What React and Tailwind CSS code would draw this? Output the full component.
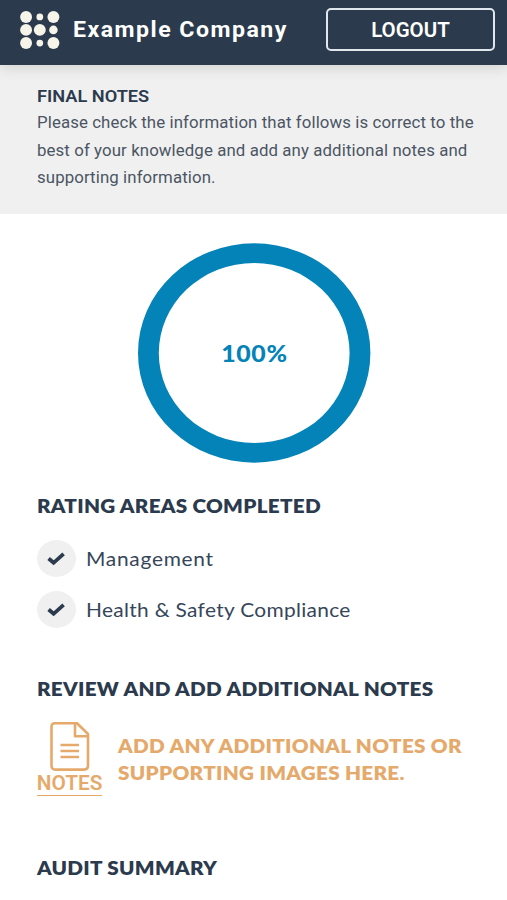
const dots = [
  [6, 6, 6], [19.8, 6, 3.4], [33.5, 6, 6],
  [6, 19, 6], [19.8, 19, 6], [33.5, 19, 4.3],
  [6, 32.2, 6], [19.8, 32.2, 3.4], [33.5, 32.2, 6],
];

function Logo() {
  return (
    <svg className="h-[38px] w-10 shrink-0" viewBox="0 0 40 38.2" fill="#f7f4ea">
      {dots.map(([x, y, r]) => (
        <circle key={`${x}-${y}`} cx={x} cy={y} r={r} />
      ))}
    </svg>
  );
}

function Header() {
  return (
    <header className="relative flex h-[65px] items-start bg-[#2b3b4d] pr-3 pl-[19.5px] text-white shadow-[0_2px_14px_rgba(0,0,0,0.14)]">
      <div className="flex h-[59px] items-center">
        <Logo />
        <span className="ml-[13px] origin-left scale-x-[1.05] whitespace-nowrap text-[22px] font-bold tracking-[1.42px]">Example Company</span>
      </div>
      <button className="mt-2 ml-auto h-[43px] w-[169px] rounded-[5px] border-2 border-[#dfe7ec] pt-[2px] text-[19.5px] font-semibold">
        <span className="inline-block scale-x-[1.05]">LOGOUT</span>
      </button>
    </header>
  );
}

function CheckItem({ children, tracking }) {
  return (
    <li className="flex h-[37px] items-center">
      <span className="flex h-[37px] w-[39px] items-center justify-center rounded-[50%] bg-[#f0f0f0]">
        <svg className="mr-px h-[14px] w-[18px]" viewBox="0 0 18 14" fill="none" stroke="#2b3b4d" strokeWidth="3.8">
          <path d="M1.6 6.5 6.6 10.8 16.6 1.9" />
        </svg>
      </span>
      <span className={`ml-[10px] -mt-[2px] origin-left scale-x-[1.045] whitespace-nowrap text-[20px] text-[#36465a] ${tracking}`}>{children}</span>
    </li>
  );
}

function Heading({ children }) {
  return (
    <h2 className="origin-left scale-x-[1.06] whitespace-nowrap text-[19.5px] leading-[27px] font-extrabold tracking-[0.26px] text-[#2b3b4d]">
      {children}
    </h2>
  );
}

export default function App() {
  return (
    <div className="h-[900px] w-[507px] overflow-hidden bg-white font-[Roboto,sans-serif]">
      <Header />
      <section className="h-[149px] bg-[#f0f0f0] pt-[18px] pl-[37px]">
        <h1 className="origin-left scale-x-[1.07] text-[17px] leading-[26px] font-semibold text-[#2b3b4d]">FINAL NOTES</h1>
        <p className="origin-left scale-x-[1.05] whitespace-nowrap text-[16px] leading-[27.5px] tracking-[0.1px] text-[#4b5563]">
          Please check the information that follows is correct to the<br />
          best of your knowledge and add any additional notes and<br />
          supporting information.
        </p>
      </section>
      <main className="px-[37px] font-[Lato,sans-serif]">
        <div className="mt-[29px] ml-[101px] grid h-[220px] w-[233px] place-items-center">
          <svg className="col-start-1 row-start-1 h-[220px] w-[233px]" viewBox="0 0 233 220">
            <path fillRule="evenodd" fill="#0483b8" d="M0 110a116.2 109.6 0 1 1 232.4 0a116.2 109.6 0 1 1 -232.4 0ZM20.8 110a95.4 90 0 1 0 190.8 0a95.4 90 0 1 0 -190.8 0Z" />
          </svg>
          <span className="col-start-1 row-start-1 scale-x-[1.13] text-[22px] font-black tracking-[0.6px] text-[#0483b8]">100%</span>
        </div>
        <div className="mt-[29px] h-7">
          <Heading>RATING AREAS COMPLETED</Heading>
        </div>
        <ul className="mt-5 flex flex-col gap-[14px]">
          <CheckItem tracking="tracking-[0.7px]">Management</CheckItem>
          <CheckItem tracking="tracking-[0.3px]">Health &amp; Safety Compliance</CheckItem>
        </ul>
        <div className="mt-[47px] h-7">
          <Heading>REVIEW AND ADD ADDITIONAL NOTES</Heading>
        </div>
        <div className="mt-[19px] flex text-[#e5aa6b]">
          <div className="flex h-[74px] w-[65px] shrink-0 flex-col items-center border-b-[1.5px] border-[#e5aa6b]">
            <svg className="h-[49px] w-[40px] shrink-0" viewBox="0 0 40 49" fill="none" stroke="currentColor" strokeWidth="2.6" strokeLinejoin="round">
              <path d="M5 1.3H27L38 12V43.5Q38 47.6 34 47.6H5.5Q1.5 47.6 1.5 43.5V5Q1.5 1.3 5 1.3ZM25 1.3V14.2H38" />
              <path d="M10.5 23H29M10.5 29H29M10.5 35H29" strokeWidth="2.5" />
            </svg>
            <span className="scale-x-[1.04] font-[Roboto,sans-serif] text-[20px] leading-6 font-semibold">NOTES</span>
          </div>
          <p className="mt-[9.5px] ml-4 origin-left scale-x-[1.06] whitespace-nowrap text-[19.5px] leading-[27px] font-extrabold tracking-[0.28px]">
            ADD ANY ADDITIONAL NOTES OR<br />SUPPORTING IMAGES HERE.
          </p>
        </div>
        <div className="mt-[58px] h-7">
          <Heading>AUDIT SUMMARY</Heading>
        </div>
      </main>
    </div>
  );
}
